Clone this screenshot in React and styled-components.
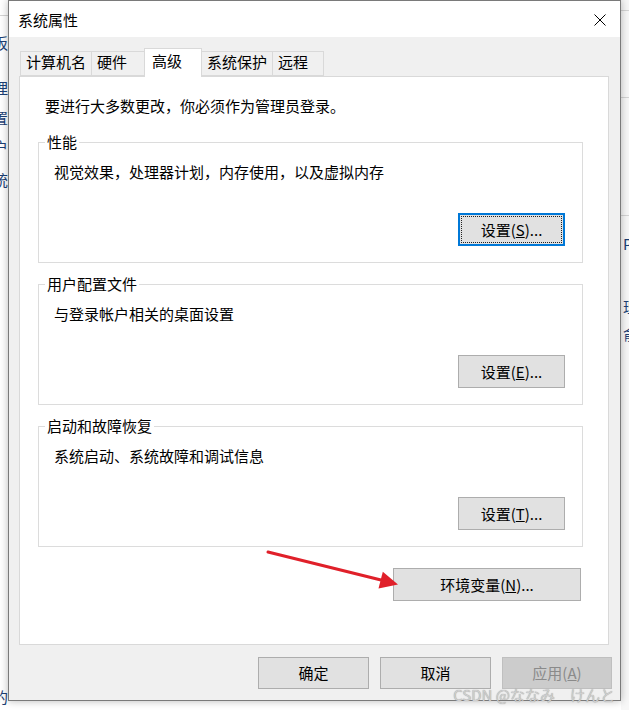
import styled, { createGlobalStyle } from "styled-components";

const GlobalStyle = createGlobalStyle`
  html, body {
    margin: 0;
    padding: 0;
    background: #fff;
  }
  body {
    font-family: "Noto Sans CJK SC", "Noto Sans", sans-serif;
    font-size: 15px;
    color: #000;
  }
`;

const Page = styled.div`
  position: relative;
  display: flex;
  width: 629px;
  height: 710px;
  overflow: hidden;
  background: #fff;
`;

const LeftBack = styled.div`
  flex: none;
  width: 8px;
  display: flex;
  flex-direction: column;
  overflow: hidden;
  background: #fff;
`;

const RightBack = styled.div`
  flex: 1;
  display: flex;
  flex-direction: column;
  overflow: hidden;
  background: #f7f7f7;
`;

const BackRule = styled.div`
  height: 1px;
  margin-top: ${(p) => p.$mt}px;
  background: #d4d4d4;
`;

const BackChar = styled.div`
  display: flex;
  justify-content: ${(p) => (p.$end ? "flex-end" : "flex-start")};
  margin-top: ${(p) => p.$mt}px;
  padding-left: ${(p) => (p.$end ? 0 : 2)}px;
  line-height: 15px;
  font-size: 15px;
  white-space: nowrap;
  color: #1c3f74;
`;

const Dialog = styled.div`
  position: relative;
  z-index: 1;
  flex: none;
  width: 613px;
  height: 701px;
  box-sizing: border-box;
  border: 1px solid #7a7a7a;
  display: flex;
  flex-direction: column;
  box-shadow: 0 0 8px rgba(0, 0, 0, 0.28);
`;

const TitleBar = styled.div`
  height: 36px;
  flex: none;
  display: flex;
  align-items: center;
  justify-content: space-between;
  padding: 2px 14px 0 9px;
  box-sizing: border-box;
  background: #fff;
`;

const Title = styled.span`
  font-size: 15px;
  line-height: 18px;
`;

const Body = styled.div`
  flex: 1;
  display: flex;
  flex-direction: column;
  padding: 11px 8px 0 10px;
  background: #f0f0f0;
`;

const TabRow = styled.div`
  display: flex;
  align-items: flex-end;
  height: 28px;
  padding-left: 1px;
`;

const Tab = styled.div`
  position: relative;
  z-index: ${(p) => (p.$active ? 2 : 1)};
  width: ${(p) => p.$w}px;
  height: ${(p) => (p.$active ? 29 : 25)}px;
  margin-left: -1px;
  margin-bottom: ${(p) => (p.$active ? -1 : 0)}px;
  box-sizing: border-box;
  display: flex;
  align-items: center;
  padding: 0 0 ${(p) => (p.$active ? 4 : 3)}px ${(p) => (p.$active ? 7 : 5)}px;
  border: 1px solid #d9d9d9;
  border-bottom: ${(p) => (p.$active ? "none" : "1px solid #d9d9d9")};
  background: ${(p) => (p.$active ? "#fff" : "#f0f0f0")};
  line-height: 18px;
  white-space: nowrap;

  &:first-child {
    margin-left: 0;
  }
`;

const Panel = styled.div`
  height: 569px;
  box-sizing: border-box;
  margin-right: 3px;
  padding: 20px 25px 0 18px;
  border: 1px solid #d9d9d9;
  background: #fff;
  display: flex;
  flex-direction: column;
`;

const AdminText = styled.div`
  margin-left: 7px;
  line-height: 18px;
`;

const Group = styled.div`
  height: 121px;
  box-sizing: border-box;
  margin-top: ${(p) => p.$mt}px;
  padding: 0 17px 16px 15px;
  border: 1px solid #dcdcdc;
  display: flex;
  flex-direction: column;
`;

const Legend = styled.div`
  align-self: flex-start;
  margin: -9px 0 0 -9px;
  padding: 0 2px;
  line-height: 16px;
  background: #fff;
`;

const Desc = styled.div`
  margin-top: 13px;
  line-height: 18px;
`;

const Button = styled.div`
  flex: none;
  width: ${(p) => p.$w}px;
  height: ${(p) => p.$h || 32}px;
  box-sizing: border-box;
  display: flex;
  align-items: center;
  justify-content: center;
  border: ${(p) => (p.$focus ? "2px" : "1px")} solid;
  border-color: ${(p) => (p.$disabled ? "#bfbfbf" : p.$focus ? "#0078d7" : "#adadad")};
  background: ${(p) => (p.$disabled ? "#cccccc" : "#e1e1e1")};
  color: ${(p) => (p.$disabled ? "#8a8a8a" : "#000")};
  outline: ${(p) => (p.$focus ? "1px dotted #222" : "none")};
  outline-offset: -4px;
  line-height: 18px;
  white-space: nowrap;
`;

const GroupButton = styled(Button)`
  margin-top: auto;
  align-self: flex-end;
`;

const EnvButton = styled(Button)`
  align-self: flex-end;
  margin-top: 21px;
  margin-right: 2px;
`;

const ButtonRow = styled.div`
  display: flex;
  justify-content: flex-end;
  gap: 11px;
  margin-top: 12px;
`;

const Arrow = styled.svg`
  position: absolute;
  left: 260px;
  top: 545px;
  z-index: 3;
  pointer-events: none;
`;

const Watermark = styled.div`
  position: absolute;
  right: 14px;
  bottom: 6px;
  z-index: 3;
  font-family: "Noto Sans CJK JP", "Noto Sans", sans-serif;
  font-size: 15px;
  line-height: 18px;
  color: #cfcfcf;
  text-shadow: 0 0 1px #8a8a8a;
  white-space: nowrap;
`;

function CloseIcon() {
  return (
    <svg width="12" height="12" viewBox="0 0 12 12">
      <path d="M0.5 0.5 L11.5 11.5 M11.5 0.5 L0.5 11.5" stroke="#000" strokeWidth="1" fill="none" />
    </svg>
  );
}

const tabs = [
  { label: "计算机名", w: 72 },
  { label: "硬件", w: 54 },
  { label: "高级", w: 58, active: true },
  { label: "系统保护", w: 72 },
  { label: "远程", w: 52 },
];

const groups = [
  { title: "性能", desc: "视觉效果，处理器计划，内存使用，以及虚拟内存", key: "S", focus: true, mt: 27 },
  { title: "用户配置文件", desc: "与登录帐户相关的桌面设置", key: "E", mt: 21 },
  { title: "启动和故障恢复", desc: "系统启动、系统故障和调试信息", key: "T", mt: 21 },
];

export default function App() {
  return (
    <>
      <GlobalStyle />
      <Page>
        <LeftBack>
          <BackRule $mt={15} />
          <BackChar $end $mt={19}>板</BackChar>
          <BackChar $end $mt={30}>理</BackChar>
          <BackChar $end $mt={15}>置</BackChar>
          <BackChar $end $mt={14}>户</BackChar>
          <BackChar $end $mt={18}>统</BackChar>
          <BackChar $end $mt={502}>的</BackChar>
        </LeftBack>

        <Dialog>
          <TitleBar>
            <Title>系统属性</Title>
            <CloseIcon />
          </TitleBar>
          <Body>
            <TabRow>
              {tabs.map((t) => (
                <Tab key={t.label} $w={t.w} $active={t.active}>
                  {t.label}
                </Tab>
              ))}
            </TabRow>
            <Panel>
              <AdminText>要进行大多数更改，你必须作为管理员登录。</AdminText>
              {groups.map((g) => (
                <Group key={g.title} $mt={g.mt}>
                  <Legend>{g.title}</Legend>
                  <Desc>{g.desc}</Desc>
                  <GroupButton $w={107} $h={33} $focus={g.focus}>
                    设置(<u>{g.key}</u>)...
                  </GroupButton>
                </Group>
              ))}
              <EnvButton $w={188} $h={33}>
                环境变量(<u>N</u>)...
              </EnvButton>
            </Panel>
            <ButtonRow>
              <Button $w={111}>确定</Button>
              <Button $w={111}>取消</Button>
              <Button $w={110} $disabled>
                应用(<u>A</u>)
              </Button>
            </ButtonRow>
          </Body>
        </Dialog>

        <RightBack>
          <BackRule $mt={10} />
          <BackRule $mt={86} />
          <BackRule $mt={117} />
          <BackChar $mt={20}>PU</BackChar>
          <BackChar $mt={48}>理</BackChar>
          <BackChar $mt={12}>俞</BackChar>
        </RightBack>

        <Arrow width="150" height="50" viewBox="0 0 150 50">
          <line x1="8" y1="7" x2="121" y2="35" stroke="#e0202a" strokeWidth="3" strokeLinecap="round" />
          <polygon points="138,39.5 118.5,43.5 122.8,26.8" fill="#e0202a" />
        </Arrow>

        <Watermark>CSDN @ななみ　けんと</Watermark>
      </Page>
    </>
  );
}
